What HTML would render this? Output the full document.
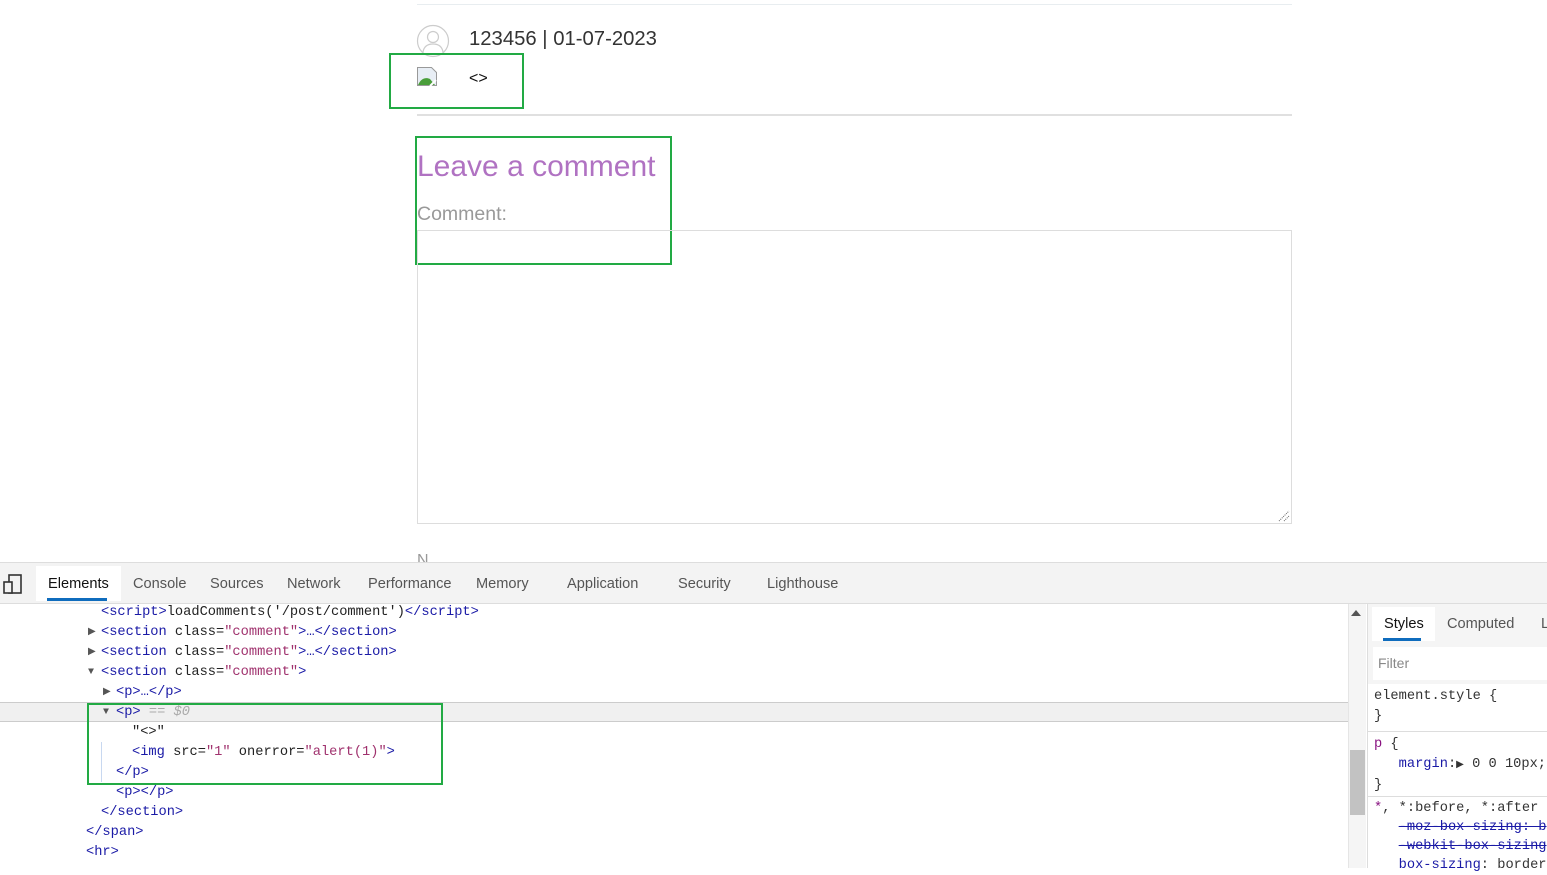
<!DOCTYPE html>
<html><head><style>
*{margin:0;padding:0;box-sizing:border-box}
body{width:1547px;height:868px;overflow:hidden;background:#fff;font-family:"Liberation Sans",sans-serif;position:relative}
.a{position:absolute}
.code{font-family:"Liberation Mono",monospace;font-size:13.7px;white-space:pre;line-height:20px}
.an{color:#1a1aa6}
.v{color:#a0326e}
.ar{display:inline-block;width:13px;font-size:10px;color:#555;vertical-align:top}
</style></head><body>
<div class="a" style="left:417px;top:4px;width:875px;height:1px;background:#e8edf0"></div>
<svg class="a" style="left:416px;top:24px" width="34" height="34" viewBox="0 0 34 34"><circle cx="17" cy="17" r="15.5" fill="none" stroke="#ccc" stroke-width="1.2"/><circle cx="17" cy="13" r="5.5" fill="none" stroke="#ccc" stroke-width="1.2"/><path d="M7 28c1-6 5-8 10-8s9 2 10 8" fill="none" stroke="#ccc" stroke-width="1.2"/></svg>
<div class="a" style="left:469px;top:28px;font-size:20.3px;color:#333">123456 | 01-07-2023</div>
<svg class="a" style="left:417px;top:67px" width="21" height="20" viewBox="0 0 21 20"><path d="M0.5 0.5h14l5 5v13h-19z" fill="#e8eef5" stroke="#999"/><path d="M1 18c3-7 8-8 12-6l5 6z" fill="#4a9e3a"/><path d="M13 19l6-6" stroke="#fff" stroke-width="2"/></svg>
<div class="a" style="left:469px;top:70px;font-size:16px;color:#111">&lt;&gt;</div>
<div class="a" style="left:389px;top:53px;width:135px;height:56px;border:2px solid #22aa44"></div>
<div class="a" style="left:417px;top:114px;width:875px;height:2px;background:#e0e0e0"></div>
<div class="a" style="left:415px;top:136px;width:257px;height:129px;border:2px solid #22aa44"></div>
<div class="a" style="left:417px;top:150px;font-size:30px;color:#b072c2">Leave a comment</div>
<div class="a" style="left:417px;top:203px;font-size:19.5px;color:#999">Comment:</div>
<div class="a" style="left:417px;top:230px;width:875px;height:294px;border:1px solid #ddd"></div>
<svg class="a" style="left:1277px;top:509px" width="13" height="13"><path d="M2 12L12 2M7 12L12 7" stroke="#666" stroke-dasharray="1 1"/></svg>
<div class="a" style="left:417px;top:552px;font-size:16px;color:#999">N</div>
<div class="a" style="left:0;top:562px;width:1547px;height:306px;background:#fff"></div>
<div class="a" style="left:0;top:562px;width:1547px;height:42px;background:#f3f3f3;border-top:1px solid #ddd;border-bottom:1px solid #ddd"></div>
<svg class="a" style="left:3px;top:574px" width="20" height="20"><rect x="6" y="1" width="12" height="18" fill="none" stroke="#333" stroke-width="1.6"/><rect x="1" y="8" width="8" height="11" fill="#f3f3f3" stroke="#333" stroke-width="1.6"/></svg>
<div class="a" style="left:36px;top:566px;width:85px;height:35px;background:#fff"></div>
<div class="a" style="left:47px;top:598px;width:60px;height:3px;background:#0f6cbd"></div>
<div class="a" style="top:576px;font-size:14.6px;color:#555;left:0;width:900px">
<span class="a" style="left:48px;color:#111">Elements</span><span class="a" style="left:133px">Console</span><span class="a" style="left:210px">Sources</span><span class="a" style="left:287px">Network</span><span class="a" style="left:368px">Performance</span><span class="a" style="left:476px">Memory</span><span class="a" style="left:567px">Application</span><span class="a" style="left:678px">Security</span><span class="a" style="left:767px">Lighthouse</span></div>
<div class="a" style="left:0;top:702px;width:1348px;height:20px;background:#f0f0f0;border-top:1px solid #ccc;border-bottom:1px solid #ccc"></div>
<div class="a" style="left:101px;top:742px;width:1px;height:40px;background:#c8d8f0"></div>
<div class="a code" style="left:0;top:603px;color:#222"><div style="padding-left:101px"><span class="an">&lt;script&gt;</span>loadComments('/post/comment')<span class="an">&lt;/script&gt;</span></div><div style="padding-left:88px"><span class="ar">▶</span><span class="an">&lt;section</span> class=<span class="v">"comment"</span><span class="an">&gt;…&lt;/section&gt;</span></div><div style="padding-left:88px"><span class="ar">▶</span><span class="an">&lt;section</span> class=<span class="v">"comment"</span><span class="an">&gt;…&lt;/section&gt;</span></div><div style="padding-left:88px"><span class="ar">▼</span><span class="an">&lt;section</span> class=<span class="v">"comment"</span><span class="an">&gt;</span></div><div style="padding-left:103px"><span class="ar">▶</span><span class="an">&lt;p&gt;…&lt;/p&gt;</span></div><div style="padding-left:103px"><span class="ar">▼</span><span class="an">&lt;p&gt;</span> <i style="color:#aaa">== $0</i></div><div style="padding-left:132px">"&lt;&gt;"</div><div style="padding-left:132px"><span class="an">&lt;img</span> src=<span class="v">"1"</span> onerror=<span class="v">"alert(1)"</span><span class="an">&gt;</span></div><div style="padding-left:116px" class="an">&lt;/p&gt;</div><div style="padding-left:116px" class="an">&lt;p&gt;&lt;/p&gt;</div><div style="padding-left:101px" class="an">&lt;/section&gt;</div><div style="padding-left:86px" class="an">&lt;/span&gt;</div><div style="padding-left:86px" class="an">&lt;hr&gt;</div></div>
<div class="a" style="left:87px;top:703px;width:356px;height:82px;border:2px solid #22aa44"></div>
<div class="a" style="left:1348px;top:604px;width:18px;height:264px;background:#f5f5f5;border-left:1px solid #e5e5e5"></div>
<div class="a" style="left:1350px;top:750px;width:15px;height:65px;background:#c2c2c2"></div>
<div class="a" style="left:1351px;top:610px;width:0;height:0;border-left:5px solid transparent;border-right:5px solid transparent;border-bottom:6px solid #555"></div>
<div class="a" style="left:1367px;top:604px;width:180px;height:264px;background:#f5f5f5;border-left:1px solid #ddd"></div>
<div class="a" style="left:1372px;top:607px;width:63px;height:34px;background:#fff"></div>
<div class="a" style="left:1383px;top:638px;width:38px;height:3px;background:#0f6cbd"></div>
<div class="a" style="left:1384px;top:616px;font-size:14.6px;color:#111">Styles</div>
<div class="a" style="left:1447px;top:616px;font-size:14.6px;color:#555">Computed</div>
<div class="a" style="left:1541px;top:616px;font-size:14.6px;color:#555">L</div>
<div class="a" style="left:1373px;top:647px;width:174px;height:33px;background:#fff"></div>
<div class="a" style="left:1378px;top:655px;font-size:14px;color:#888">Filter</div>
<div class="a" style="left:1368px;top:684px;width:179px;height:184px;background:#fff"></div>
<div class="a" style="left:1368px;top:731px;width:179px;height:1px;background:#ddd"></div>
<div class="a" style="left:1368px;top:796px;width:179px;height:1px;background:#ddd"></div>
<div class="a code" style="left:1374px;top:687px;color:#333">element.style {
}</div>
<div class="a code" style="left:1374px;top:735px;color:#333"><span style="color:#881280">p</span> {
   <span class="an">margin</span>:<span style="font-size:10px">▶</span> 0 0 10px;
}</div>
<div class="a code" style="left:1374px;top:799px;line-height:19px;color:#333"><span style="color:#881280">*</span>, *:before, *:after
   <s class="an">-moz-box-sizing: b</s>
   <s class="an">-webkit-box-sizing</s>
   <span class="an">box-sizing</span>: border</div>
</body></html>
